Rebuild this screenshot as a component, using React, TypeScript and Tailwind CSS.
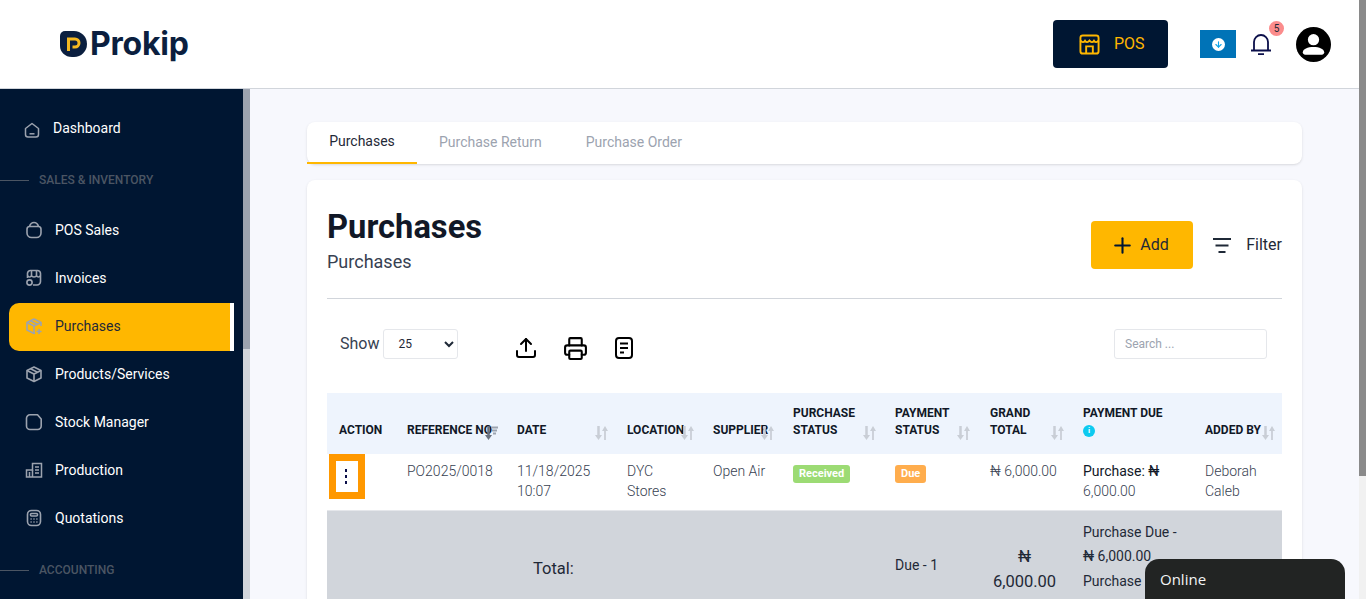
import React from 'react';
import { ArrowDown, Plus, Printer, Upload } from 'lucide-react';

const navIconClass = 'w-[18px] h-[18px] shrink-0 text-[#9ca3af]';

const HomeIcon = () => (
  <svg viewBox="0 0 16 16" fill="none" stroke="currentColor" strokeWidth="1.500" className="w-[16px] h-[16px] shrink-0 mt-[4px] text-[#9ca3af]">
    <path d="M1.500 6.500 8 1.500l6.500 5V12.500a2.500 2.500 0 0 1-2.500 2.500H4a2.500 2.500 0 0 1-2.500-2.500z" strokeLinejoin="round" />
    <path d="M5.500 11.800h5" />
  </svg>
);

const BagIcon = () => (
  <svg viewBox="0 0 18 18" fill="none" stroke="currentColor" strokeWidth="1.600" className={navIconClass}>
    <path d="M4.500 5.500h9c1.600 0 2.500 1.200 2.500 2.800V12c0 2.500-2 4.500-4.500 4.500h-5C4 16.500 2 14.500 2 12V8.300c0-1.600.9-2.800 2.500-2.800z" />
    <path d="M4.500 5.500C5.200 3 7 1.500 9 1.500s3.800 1.500 4.500 4" />
  </svg>
);

const ShopIcon = () => (
  <svg viewBox="0 0 18 18" fill="none" stroke="currentColor" strokeWidth="1.600" className={navIconClass}>
    <path d="M2.500 9V4.500a3 3 0 0 1 3-3h7a3 3 0 0 1 3 3v8a3.500 3.500 0 0 1-3.500 3.500H8" />
    <path d="M2.500 6.500c1 2 3 2 4 0 .8 2 4.200 2 5 0 1 2 3 2 4 0M6.500 2v4.500M11.500 2v4.500" />
    <circle cx="4.500" cy="13.500" r="2.600" />
  </svg>
);

const BoxPlusIcon = () => (
  <svg viewBox="0 0 18 18" fill="none" stroke="currentColor" strokeWidth="1.600" className={navIconClass}>
    <path d="M16 9V5.500L9 2 2 5.500v7.500l7 3.500 1-.5" strokeLinejoin="round" />
    <path d="M2 5.500 9 9l7-3.500M9 9v7.500M5.500 3.800l7 3.500" />
    <path d="M14 12v5M11.500 14.500h5" />
  </svg>
);

const BoxIcon = () => (
  <svg viewBox="0 0 18 18" fill="none" stroke="currentColor" strokeWidth="1.600" className={navIconClass}>
    <path d="M16 5.500v7.500l-7 3.500L2 13V5.500L9 2z" strokeLinejoin="round" />
    <path d="M2 5.500 9 9l7-3.500M9 9v7.500M5.500 3.800l7 3.500" />
  </svg>
);

const FolderIcon = () => (
  <svg viewBox="0 0 18 18" fill="none" stroke="currentColor" strokeWidth="1.600" className={navIconClass}>
    <path d="M5 1.800h7.500l3.700 4.200v7a3.500 3.500 0 0 1-3.500 3.500H5A3.500 3.500 0 0 1 1.500 13V5.300A3.500 3.500 0 0 1 5 1.800z" strokeLinejoin="round" />
  </svg>
);

const BuildingIcon = () => (
  <svg viewBox="0 0 18 18" fill="none" stroke="currentColor" strokeWidth="1.500" className={navIconClass}>
    <path d="M1.500 16V9h6V2.500h9V16z" />
    <path d="M7.500 9v7M10 6h4M10 9h4M10 12h4M4.500 11v5" />
  </svg>
);

const CalculatorIcon = () => (
  <svg viewBox="0 0 18 18" fill="none" stroke="currentColor" strokeWidth="1.600" className={navIconClass}>
    <rect x="2.500" y="1.500" width="13" height="15" rx="4" />
    <rect x="5.500" y="4.500" width="7" height="2.500" rx="1" />
    <path d="M5.500 10h1.200M8.400 10h1.200M11.300 10h1.200M5.500 13h1.200M8.400 13h1.200M11.300 13h1.200" />
  </svg>
);

const navItems = [
  { label: 'POS Sales', icon: <BagIcon /> },
  { label: 'Invoices', icon: <ShopIcon /> },
  { label: 'Purchases', icon: <BoxPlusIcon />, active: true },
  { label: 'Products/Services', icon: <BoxIcon /> },
  { label: 'Stock Manager', icon: <FolderIcon /> },
  { label: 'Production', icon: <BuildingIcon /> },
  { label: 'Quotations', icon: <CalculatorIcon /> },
];

const SectionLabel = ({ text }: { text: string }) => (
  <div className="h-[54px] pt-[2px] flex items-center gap-[10px]">
    <div className="w-[29px] h-px bg-[#4b5563]" />
    <span className="text-xs font-medium text-[#4b5563] uppercase">{text}</span>
  </div>
);

const Sidebar = () => (
  <aside className="w-[250px] shrink-0 flex min-h-0">
    <div className="w-[243px] bg-[#001632] pt-[15px] overflow-hidden">
      <div className="h-[48px] flex items-center pl-[24px] gap-[13px] text-sm text-white">
        <HomeIcon />
        <span>Dashboard</span>
      </div>
      <SectionLabel text="Sales & Inventory" />
      {navItems.map((item) =>
        item.active ? (
          <div key={item.label} className="h-[48px] mt-px -mb-px pb-[2px] ml-[9px] w-[225px] flex items-center pl-[16px] gap-[12px] text-sm text-[#1f2937] bg-[#ffb700] rounded-l-[10px] border-r-4 border-white">
            {item.icon}
            <span>{item.label}</span>
          </div>
        ) : (
          <div key={item.label} className="h-[48px] flex items-center pl-[25px] gap-[12px] text-sm text-white">
            {item.icon}
            <span>{item.label}</span>
          </div>
        ),
      )}
      <SectionLabel text="Accounting" />
    </div>
    <div className="w-[7px] bg-[#d1d5db]">
      <div className="h-[260px] bg-[#9ca3af]" />
    </div>
  </aside>
);

const Header = () => (
  <header className="h-[89px] shrink-0 bg-white border-b border-[#d1d5db] flex items-center pl-[60px] pr-[28px]">
    <div className="flex items-center gap-[3px]">
      <svg viewBox="0 0 27 27" className="w-[27px] h-[27px]">
        <path d="M0 5a5 5 0 0 1 5-5h9a13 13 0 0 1 0 26h-2C5 26 0 21 0 15z" fill="#0b1f3f" />
        <path d="M8.500 20V8h6.500a4 4 0 0 1 0 8h-2.500" fill="none" stroke="#f5b921" strokeWidth="3" />
      </svg>
      <span className="font-['Inter',sans-serif] font-bold text-[32px] leading-none tracking-[-0.2px] text-[#0b1f3f]">Prokip</span>
    </div>
    <div className="ml-auto flex items-center">
      <button className="w-[115px] h-[48px] bg-[#001632] rounded flex items-center pl-[26px] gap-[14px] text-[#ffb700] text-base">
        <svg viewBox="0 0 22 22" fill="none" stroke="currentColor" strokeWidth="2" className="w-[21px] h-[21px]">
          <rect x="1.500" y="1.500" width="19" height="19" rx="2.500" />
          <path d="M1.500 7c1.500 2 3.500 2 4.800 0 1.300 2 3.200 2 4.700 0 1.500 2 3.400 2 4.700 0 1.300 2 3.300 2 4.800 0" />
          <path d="M7.500 20v-7h7v7" />
        </svg>
        POS
      </button>
      <div className="ml-[32px] w-[36px] h-[28px] bg-[#0073b7] flex items-center justify-center">
        <span className="w-[13px] h-[13px] rounded-full bg-white flex items-center justify-center">
          <ArrowDown size={9} strokeWidth={3} className="text-[#0ea5e9]" />
        </span>
      </div>
      <div className="relative ml-[15px] w-[20px] h-[21px] text-[#0b0f4a]">
        <svg viewBox="0 0 20 21" fill="none" stroke="currentColor" strokeWidth="1.800" className="w-[20px] h-[21px]">
          <path d="M0 16.500h20M3 16.500V8a7 7 0 0 1 14 0v8.500M7 20.200h6" />
        </svg>
        <span className="absolute -top-[13px] left-[18px] w-[15px] h-[15px] rounded-full bg-[#fb8c8c] text-[10px] leading-[15px] text-center text-[#1f2937]">5</span>
      </div>
      <svg viewBox="0 0 36 36" className="ml-[25px] w-[35px] h-[35px]">
        <circle cx="18" cy="18" r="18" fill="#000" />
        <circle cx="18" cy="13" r="5.800" fill="#fff" />
        <path d="M7 26c0-3.500 5-5.500 11-5.500s11 2 11 5.500c0 1.500-1 2.500-2.500 2.500h-17C8 28.500 7 27.500 7 26z" fill="#fff" />
      </svg>
    </div>
  </header>
);

const SortIcon = ({ dark, className }: { dark?: boolean; className: string }) => (
  <svg viewBox="0 0 13 14" className={`absolute w-[13px] h-[14px] ${className}`} fill="none">
    <path d="M3.500 0v10" stroke={dark ? '#6b7280' : '#c9ced6'} strokeWidth="2.500" />
    <path d="M0 9l3.500 5 3.500-5z" fill={dark ? '#6b7280' : '#c9ced6'} />
    {dark ? (
      <path d="M6 1.500h7M7 4.500h5M8 7.500h3" stroke="#9ca3af" strokeWidth="2" />
    ) : (
      <>
        <path d="M10 14V4" stroke="#c9ced6" strokeWidth="1.800" />
        <path d="M7 5l3-5 3 5z" fill="#c9ced6" />
      </>
    )}
  </svg>
);

const columns = [
  { w: 'w-[68px]', label: 'ACTION' },
  { w: 'w-[110px]', label: 'REFERENCE NO', sort: 'left-[90px]', dark: true },
  { w: 'w-[110px]', label: 'DATE', sort: 'left-[90px]' },
  { w: 'w-[86px]', label: 'LOCATION', sort: 'left-[66px]' },
  { w: 'w-[80px]', label: 'SUPPLIER', sort: 'left-[60px]' },
  { w: 'w-[102px]', label: 'PURCHASE STATUS', sort: 'left-[82px]' },
  { w: 'w-[95px]', label: 'PAYMENT STATUS', sort: 'left-[74px]' },
  { w: 'w-[93px]', label: 'GRAND TOTAL', sort: 'left-[73px]' },
  { w: 'w-[122px]', label: 'PAYMENT DUE', info: true },
  { w: 'w-[89px]', label: 'ADDED BY', sort: 'left-[69px]' },
];

const PurchasesTable = () => (
  <table className="w-[955px] table-fixed border-collapse text-[14px] leading-[20px] text-[#374151]">
    <colgroup>
      {columns.map((c) => (
        <col key={c.label} className={c.w} />
      ))}
    </colgroup>
    <thead>
      <tr className="h-[61px] bg-[#eef4fd]">
        {columns.map((c) => (
          <th key={c.label} className="relative pl-[12px] pr-0 pb-[15px] text-left align-bottom text-xs leading-[17px] font-bold text-[#111827]">
            {c.info ? (
              <div className="w-[90px]">
                {c.label}
                <div className="h-[17px] flex items-center">
                  <span className="w-[12px] h-[12px] rounded-full bg-[#0dcaf0] text-white text-[8px] leading-[12px] text-center">i</span>
                </div>
              </div>
            ) : (
              <div className={c.label.includes(' ') && c.label !== 'REFERENCE NO' && c.label !== 'ADDED BY' ? 'w-[75px]' : 'whitespace-nowrap'}>{c.label}</div>
            )}
            {c.sort && <SortIcon dark={c.dark} className={`${c.sort} top-[33px]`} />}
          </th>
        ))}
      </tr>
    </thead>
    <tbody>
      <tr className="h-[56px] border-b border-[#e5e7eb] align-top font-light">
        <td className="pl-[2px] pt-0">
          <div className="w-[36px] h-[45px] border-[7px] border-[#ff9800] bg-white flex flex-col items-center justify-center gap-[3px] pr-[2px]">
            <span className="w-[2px] h-[3px] bg-[#0b0f4a]" />
            <span className="w-[2px] h-[3px] bg-[#0b0f4a]" />
            <span className="w-[2px] h-[3px] bg-[#0b0f4a]" />
          </div>
        </td>
        <td className="pl-[12px] pt-[7px]">PO2025/0018</td>
        <td className="pl-[12px] pt-[7px]">11/18/2025<br />10:07</td>
        <td className="pl-[12px] pr-[12px] pt-[7px]">DYC Stores</td>
        <td className="pl-[12px] pt-[7px]">Open Air</td>
        <td className="pl-[12px] pt-[8px]">
          <span className="inline-block h-[18px] px-[6px] rounded-[3px] bg-[#9cdb74] text-white text-[11px] leading-[17px] font-bold">Received</span>
        </td>
        <td className="pl-[12px] pt-[8px]">
          <span className="inline-block h-[18px] px-[6px] rounded-[3px] bg-[#ffad4d] text-white text-[11px] leading-[17px] font-bold">Due</span>
        </td>
        <td className="pl-[12px] pt-[7px]">₦ 6,000.00</td>
        <td className="pl-[12px] pt-[7px] pr-[20px]"><span className="font-normal text-[#111827]">Purchase: ₦</span> 6,000.00</td>
        <td className="pl-[12px] pr-[12px] pt-[7px]">Deborah Caleb</td>
      </tr>
      <tr className="bg-[#d1d5db] text-[#1f2937]">
        <td colSpan={5} className="pl-[206px] text-[16.500px] align-middle">Total:</td>
        <td />
        <td className="pl-[12px] pb-[8px] align-middle">Due - 1</td>
        <td className="text-center text-[16.500px] leading-[25px] align-middle">₦<br />6,000.00</td>
        <td className="pl-[12px] pt-[9px] pb-[9px] pr-[14px] leading-[24.500px]">Purchase Due - ₦ 6,000.00 Purchase Return Due</td>
        <td />
      </tr>
    </tbody>
  </table>
);

const PurchasesCard = () => (
  <section className="mt-[16px] w-[995px] bg-white rounded-lg shadow-sm p-[20px] pt-[27px]">
    <div className="flex items-center h-[76px]">
      <div className="self-start pt-[2px]">
        <h1 className="text-[32.700px] leading-[36px] font-bold text-[#111827]">Purchases</h1>
        <p className="text-lg leading-[24px] text-[#374151] mt-[5px]">Purchases</p>
      </div>
      <button className="ml-auto w-[102px] h-[48px] bg-[#ffb700] rounded flex items-center pl-[19px] gap-[5px] text-base text-[#1f2937]">
        <Plus size={25} strokeWidth={2} className="text-[#001632]" />
        Add
      </button>
      <div className="ml-[20px] flex items-center gap-[15px] text-base text-[#1f2937]">
        <svg viewBox="0 0 18 15" className="w-[18px] h-[15px]" fill="none" stroke="#1f2937" strokeWidth="2">
          <path d="M0 1h18M2.500 7.500h13M5.500 14h7" />
        </svg>
        Filter
      </div>
    </div>
    <div className="mt-[15px] h-px bg-[#d1d5db]" />
    <div className="mt-[30px] h-[30px] flex items-center">
      <label className="ml-[13px] text-base text-[#374151]">Show</label>
      <select className="ml-[4px] w-[75px] h-[30px] border border-[#e5e7eb] rounded-[3px] bg-white text-xs text-[#1f2937] pl-[10px]">
        <option>25</option>
      </select>
      <div className="ml-[56px] pt-[8px] flex items-center gap-[24px] text-black">
        <Upload size={24} strokeWidth={2} className="mr-px" />
        <Printer size={25} strokeWidth={2} />
        <svg viewBox="0 0 24 24" fill="none" stroke="currentColor" strokeWidth="2" className="w-[24px] h-[24px]">
          <rect x="4" y="2" width="16" height="20" rx="3" />
          <path d="M8 7.500h8M8 12h8M8 16.500h4" />
        </svg>
      </div>
      <input placeholder="Search ..." className="ml-auto mr-[15px] w-[153px] h-[30px] border border-[#e5e7eb] rounded-[3px] px-[10px] text-xs placeholder:text-[#9ca3af]" />
    </div>
    <div className="mt-[34px]">
      <PurchasesTable />
    </div>
  </section>
);

export default function App() {
  return (
    <div className="relative h-screen overflow-hidden flex font-['Roboto',sans-serif]">
      <div className="flex-1 min-w-0 flex flex-col">
        <Header />
        <div className="flex-1 min-h-0 flex">
          <Sidebar />
          <main className="flex-1 min-w-0 bg-[#f7f8fd] pl-[57px] pt-[33px] overflow-hidden">
            <nav className="w-[995px] h-[42px] bg-white rounded-lg shadow-sm flex text-sm">
              <div className="w-[110px] h-[42px] border-b-2 border-[#ffb700] text-[#1f2937] text-center leading-[38px]">Purchases</div>
              <div className="ml-[22px] text-[#9ca3af] leading-[40px]">Purchase Return</div>
              <div className="ml-[44px] text-[#9ca3af] leading-[40px]">Purchase Order</div>
            </nav>
            <PurchasesCard />
          </main>
        </div>
      </div>
      <div className="w-[7px] shrink-0 bg-[#f1f1f1]">
        <div className="h-[476px] bg-[#8a8a8a]" />
      </div>
      <div className="absolute right-[21px] bottom-0 w-[200px] h-[40px] bg-[#222423] rounded-t-[14px] pl-[15px] pt-[10px] text-[15px] leading-[20px] font-medium text-[#f3f4f6] font-['Open_Sans',sans-serif]">Online</div>
    </div>
  );
}
